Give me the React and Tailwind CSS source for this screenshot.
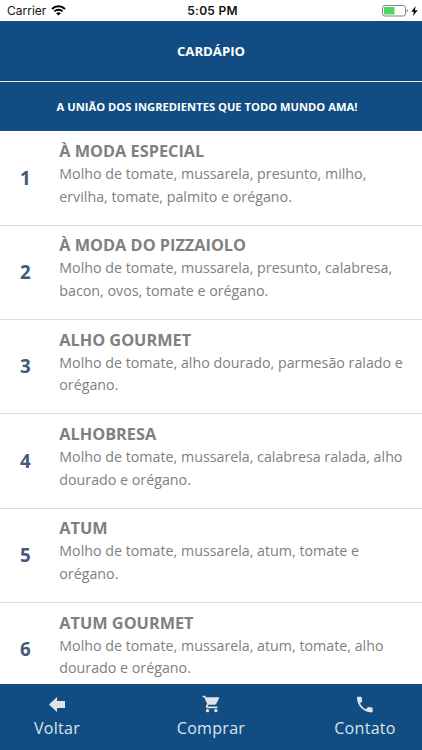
const items = [
  ["À MODA ESPECIAL", "Molho de tomate, mussarela, presunto, milho,", "ervilha, tomate, palmito e orégano."],
  ["À MODA DO PIZZAIOLO", "Molho de tomate, mussarela, presunto, calabresa,", "bacon, ovos, tomate e orégano."],
  ["ALHO GOURMET", "Molho de tomate, alho dourado, parmesão ralado e", "orégano."],
  ["ALHOBRESA", "Molho de tomate, mussarela, calabresa ralada, alho", "dourado e orégano."],
  ["ATUM", "Molho de tomate, mussarela, atum, tomate e", "orégano."],
  ["ATUM GOURMET", "Molho de tomate, mussarela, atum, tomate, alho", "dourado e orégano."],
];

function StatusBar() {
  return (
    <div className="flex h-[21px] shrink-0 items-center justify-between bg-white pl-[7px] pr-[4px] font-['Inter',sans-serif] leading-[21px] text-[#111]">
      <div className="flex w-[120px] items-center gap-[5px]">
        <span className="text-[12px]">Carrier</span>
        <svg width="15" height="11" viewBox="0 0 15 11" fill="none" stroke="#000" strokeWidth="2">
          <path d="M1 4C4.7 .4 10.3 .4 14 4" />
          <path d="M3.4 6.4C5.7 4.2 9.3 4.2 11.6 6.4" />
          <path d="M7.5 10.5 5.2 8.2C6.5 7 8.5 7 9.8 8.2Z" fill="#000" stroke="none" />
        </svg>
      </div>
      <span className="text-[12px] font-semibold tracking-[0.25px]">5:05 PM</span>
      <div className="flex w-[120px] items-center justify-end gap-[3px]">
        <svg width="26" height="12" viewBox="0 0 26 12">
          <rect x=".5" y=".5" width="23" height="10.5" rx="2.2" fill="#fff" stroke="#858585" />
          <rect x="2" y="2" width="10.5" height="7.5" rx=".6" fill="#4cd964" />
          <path d="M24.6 4v3.5q1.3-.5 1.3-1.75T24.6 4Z" fill="#858585" />
        </svg>
        <svg width="7" height="10" viewBox="0 0 7 10">
          <path d="M4.6 0 .3 5.7h2.6L2 10 6.7 4.2H3.9Z" fill="#000" />
        </svg>
      </div>
    </div>
  );
}

function Tab({ icon, label, className }) {
  return (
    <div className={"flex flex-col items-center " + className}>
      <div className="flex h-[20px] items-center">{icon}</div>
      <span className="mt-[3px] text-[16px] leading-[22px] tracking-[0.3px]">{label}</span>
    </div>
  );
}

export default function App() {
  return (
    <div className="flex h-[750px] w-[422px] flex-col overflow-hidden bg-white font-['Open_Sans',sans-serif]">
      <StatusBar />
      <header className="flex h-[61px] shrink-0 items-center justify-center border-b border-[#e3ebf3] bg-[#114d82] pt-[2px] text-[13.2px] font-bold text-white">
        CARDÁPIO
      </header>
      <h2 className="flex h-[49px] shrink-0 items-center justify-center bg-[#114d82] pr-[8px] pt-[2px] text-[11.2px] font-bold text-white">
        A UNIÃO DOS INGREDIENTES QUE TODO MUNDO AMA!
      </h2>
      <main className="min-h-0 flex-1 overflow-hidden pt-[0.4px]">
        {items.map(([name, first, second], i) => (
          <div key={name} className="flex h-[94.35px] border-b border-[#dedede] pt-[7.7px]">
            <div className="w-[59.3px] shrink-0 pl-[20px] pt-[25.7px] text-[18.7px] font-bold leading-[26px] text-[#45597a]">{i + 1}</div>
            <div className="whitespace-nowrap text-[#808080]">
              <div className="text-[16.3px] font-bold leading-[24px]">{name}</div>
              <div className="text-[14.25px] leading-[22.5px]">
                {first}
                <br />
                {second}
              </div>
            </div>
          </div>
        ))}
      </main>
      <nav className="flex h-[66px] shrink-0 justify-between bg-[#114d82] px-[27px] pt-[10px] text-[#dce4ec]">
        <Tab
          className="w-[60px]"
          label="Voltar"
          icon={
            <svg width="16" height="15" viewBox="0 0 16 15">
              <path d="M8 0v4h8v7H8v4L0 7.5Z" fill="#e0e3e7" />
            </svg>
          }
        />
        <Tab
          className="w-[80px]"
          label="Comprar"
          icon={
            <svg width="20" height="20" viewBox="-0.8 0 24 24" fill="#e0e3e7">
              <circle cx="7" cy="20" r="2" />
              <circle cx="17" cy="20" r="2" />
              <path d="M1 2v2h2l3.6 7.59-1.35 2.45C4.52 15.37 5.48 17 7 17h12v-2H7.42a.25.25 0 0 1-.22-.37l.9-1.63h7.45c.75 0 1.41-.41 1.75-1.03l3.58-6.49A1 1 0 0 0 20 4H5.21l-.94-2Z" />
            </svg>
          }
        />
        <Tab
          className="w-[60px]"
          label="Contato"
          icon={
            <svg width="21" height="21" viewBox="0.8 0 24 24" fill="#e0e3e7">
              <path d="M6.62 10.79c1.44 2.83 3.76 5.14 6.59 6.59l2.2-2.2c.27-.27.67-.36 1.02-.24 1.12.37 2.33.57 3.57.57.55 0 1 .45 1 1V20c0 .55-.45 1-1 1C10.61 21 3 13.39 3 4c0-.55.45-1 1-1h3.5c.55 0 1 .45 1 1 0 1.25.2 2.45.57 3.57.11.35.03.74-.25 1.02Z" />
            </svg>
          }
        />
      </nav>
    </div>
  );
}
